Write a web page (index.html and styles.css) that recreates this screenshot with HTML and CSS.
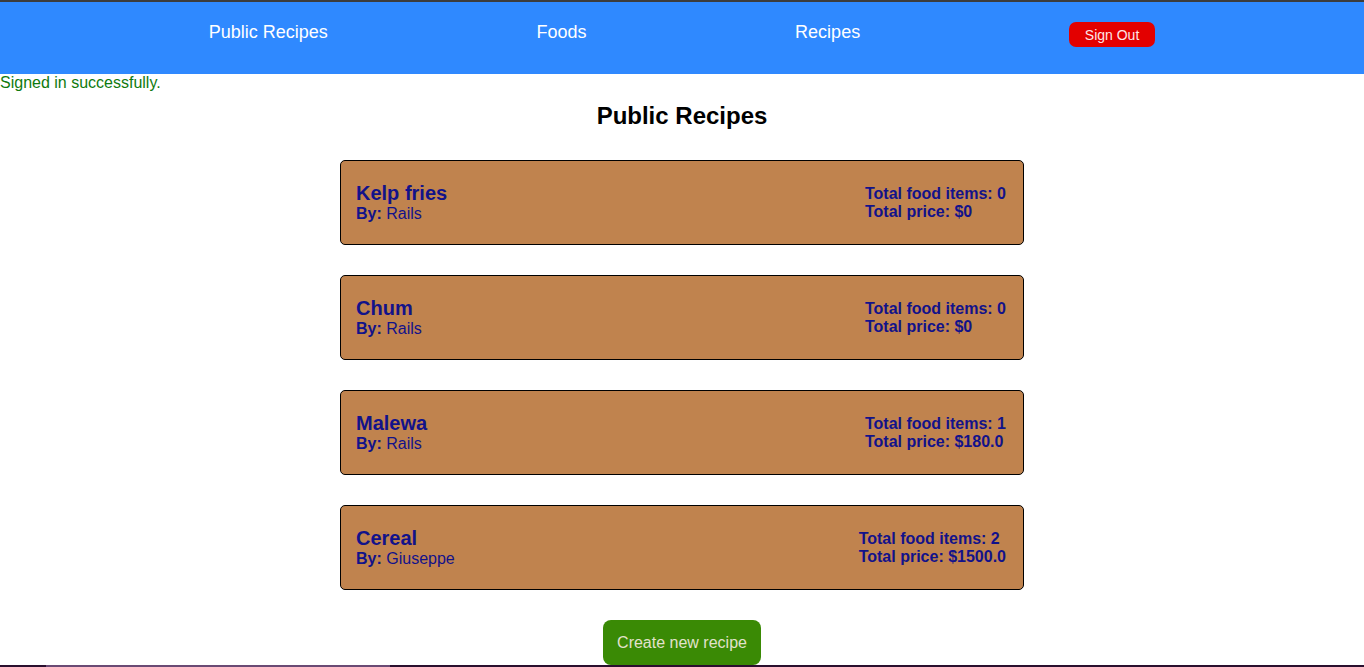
FILE: index.html
```html
<!DOCTYPE html>
<html lang="en">
<head>
<meta charset="utf-8">
<title>Public Recipes</title>
<link rel="stylesheet" href="styles.css">
</head>
<body>
<nav class="nav">
  <a class="nav-link" href="#">Public Recipes</a>
  <a class="nav-link" href="#">Foods</a>
  <a class="nav-link" href="#">Recipes</a>
  <button class="sign-out">Sign Out</button>
</nav>
<p class="notice">Signed in successfully.</p>
<main class="main">
  <h2 class="page-title">Public Recipes</h2>
  <div class="card">
    <div class="card-left">
      <div class="card-title">Kelp fries</div>
      <div class="card-by"><b>By:</b> Rails</div>
    </div>
    <div class="card-right">
      <div>Total food items: 0</div>
      <div>Total price: $0</div>
    </div>
  </div>
  <div class="card">
    <div class="card-left">
      <div class="card-title">Chum</div>
      <div class="card-by"><b>By:</b> Rails</div>
    </div>
    <div class="card-right">
      <div>Total food items: 0</div>
      <div>Total price: $0</div>
    </div>
  </div>
  <div class="card">
    <div class="card-left">
      <div class="card-title">Malewa</div>
      <div class="card-by"><b>By:</b> Rails</div>
    </div>
    <div class="card-right">
      <div>Total food items: 1</div>
      <div>Total price: $180.0</div>
    </div>
  </div>
  <div class="card">
    <div class="card-left">
      <div class="card-title">Cereal</div>
      <div class="card-by"><b>By:</b> Giuseppe</div>
    </div>
    <div class="card-right">
      <div>Total food items: 2</div>
      <div>Total price: $1500.0</div>
    </div>
  </div>
  <button class="create-btn">Create new recipe</button>
</main>
<div class="bottom-bar"><span class="bottom-bar-seg"></span></div>
</body>
</html>
```

FILE: styles.css
```css
* { box-sizing: border-box; }

body {
  margin: 0;
  font-family: "Liberation Sans", Arial, sans-serif;
  background: #fff;
  color: #000;
}

.nav {
  display: flex;
  justify-content: space-evenly;
  align-items: flex-start;
  height: 74px;
  background: #2f89ff;
  border-top: 2px solid #3c3c3c;
  padding-top: 20px;
}

.nav-link {
  color: #fff;
  font-size: 18px;
  text-decoration: none;
}

.sign-out {
  margin-top: 0;
  height: 25px;
  padding: 0 16px;
  background: #e30000;
  color: #fde6e6;
  border: none;
  border-radius: 7px;
  font-family: "Liberation Sans", Arial, sans-serif;
  font-size: 14px;
}

.notice {
  margin: 0;
  color: #0f7a0f;
  font-size: 16px;
}

.main {
  display: flex;
  flex-direction: column;
  align-items: center;
}

.page-title {
  margin: 10px 0 30px;
  font-size: 24px;
  font-weight: bold;
}

.card {
  width: 684px;
  height: 85px;
  margin-bottom: 30px;
  display: flex;
  justify-content: space-between;
  align-items: center;
  padding: 0 17px 0 15px;
  background: #c0834e;
  border: 1px solid #000;
  border-radius: 5px;
  color: #12128a;
}

.card-title {
  font-size: 20px;
  font-weight: bold;
  line-height: 23px;
}

.card-by {
  font-size: 16px;
}

.card-right {
  font-size: 16px;
  font-weight: bold;
}

.create-btn {
  height: 45px;
  padding: 0 14px;
  background: #3a8a05;
  color: #e2e2cc;
  border: none;
  border-radius: 8px;
  font-family: "Liberation Sans", Arial, sans-serif;
  font-size: 16px;
}

.bottom-bar {
  position: fixed;
  left: 0;
  right: 0;
  bottom: 0;
  height: 2px;
  background: #2a0f2e;
}

.bottom-bar-seg {
  display: block;
  margin-left: 46px;
  width: 344px;
  height: 2px;
  background: #6a4a74;
}
```
